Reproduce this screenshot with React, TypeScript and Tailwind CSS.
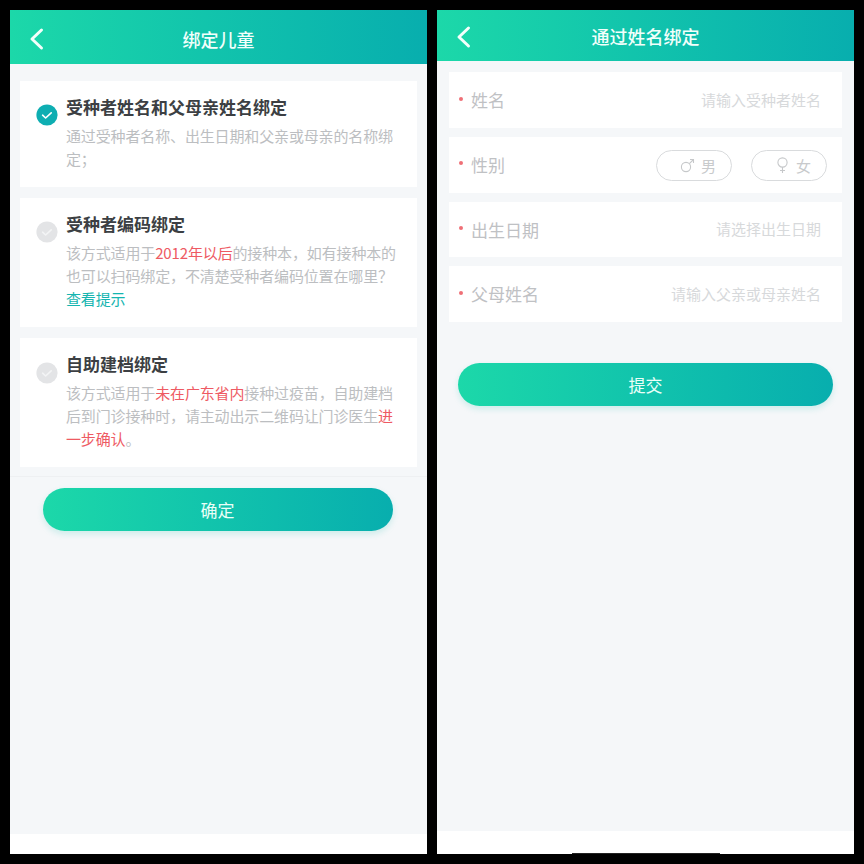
import React from "react";

const font = { fontFamily: '"Noto Sans CJK SC", "Noto Sans", sans-serif' };

function Header({ title, h, backTop, titlePad }: { title: string; h: string; backTop: string; titlePad: string }) {
  return (
    <div className={`${h} shrink-0 relative flex items-center justify-center bg-gradient-to-r from-[#1cd8a9] to-[#08aeae]`}>
      <svg className={`absolute left-[18px] ${backTop}`} width="17" height="24" viewBox="0 0 17 24" fill="none">
        <path d="M13.5 3 4 12l9.5 9" stroke="#f4fffb" strokeWidth="3" strokeLinecap="round" strokeLinejoin="round" />
      </svg>
      <span className={`text-[18px] leading-[24px] font-medium text-[#f2fffb] ${titlePad}`}>{title}</span>
    </div>
  );
}

function Check({ on }: { on: boolean }) {
  return (
    <svg className="shrink-0" width="22" height="22" viewBox="0 0 22 22" fill="none">
      <circle cx="11" cy="11" r="10.6" fill={on ? "#0eaeb2" : "#e3e4e6"} />
      <path d="M6.6 11.2l3 2.8 5.6-5.2" stroke={on ? "#ffffff" : "#f3f4f5"} strokeWidth="1.6" strokeLinecap="round" strokeLinejoin="round" />
    </svg>
  );
}

function Option({ on, title, h, checkTop, children }: { on: boolean; title: string; h: string; checkTop: string; children: React.ReactNode }) {
  return (
    <div className={`${h} bg-white flex pl-[16px]`}>
      <div className={`w-[30px] shrink-0 ${checkTop}`}>
        <Check on={on} />
      </div>
      <div className="flex-1 pt-[14px]">
        <div className="text-[17px] leading-[24px] font-semibold text-[#3c3f43] whitespace-nowrap">{title}</div>
        <div className="text-[15px] leading-[23px] tracking-[-0.14px] text-[#bcbec1] mt-[5px] whitespace-nowrap">{children}</div>
      </div>
    </div>
  );
}

const Red = ({ children }: { children: React.ReactNode }) => <span className="text-[#ee5a63]">{children}</span>;

function Button({ label, w }: { label: string; w: string }) {
  return (
    <div className={`${w} h-[43px] rounded-full flex items-center justify-center bg-gradient-to-r from-[#1cd8a9] to-[#08aeae] shadow-[0_3px_6px_rgba(20,190,170,0.18)] text-[17px] text-[#eafff8]`}>
      {label}
    </div>
  );
}

function Row({ label, placeholder, h, children }: { label: string; placeholder?: string; h: string; children?: React.ReactNode }) {
  return (
    <div className={`${h} bg-white flex items-center pl-[10px] pr-[21px]`}>
      <span className="w-[4px] h-[4px] rounded-full bg-[#ef6f76] mr-[8px] mb-[3px]" />
      <span className="text-[17px] text-[#bfc1c4] leading-[24px]">{label}</span>
      <div className="flex-1 flex justify-end items-center">
        {placeholder ? <span className="text-[15px] text-[#d7d9db]">{placeholder}</span> : children}
      </div>
    </div>
  );
}

function Pill({ label, icon }: { label: string; icon: React.ReactNode }) {
  return (
    <div className="w-[76px] h-[31px] rounded-full border border-[#d9dbdd] flex items-center justify-end pr-[15px] gap-[6px] text-[15px] text-[#c8cacc]">
      {icon}
      <span>{label}</span>
    </div>
  );
}

export default function App() {
  return (
    <div style={font} className="w-[864px] h-[864px] bg-black flex gap-[10px] pl-[10px] pt-[10px]">
      <div className="w-[417px] h-[844px] flex flex-col bg-white">
        <Header title="绑定儿童" h="h-[54px]" backTop="top-[17px]" titlePad="pt-[4px]" />
        <div className="flex-1 bg-[#f5f7f9] flex flex-col">
          <div className="px-[10px] pt-[17px] pb-[9px] flex flex-col gap-[11px]">
            <Option on title="受种者姓名和父母亲姓名绑定" h="h-[106px]" checkTop="pt-[23px]">
              通过受种者名称、出生日期和父亲或母亲的名称绑
              <br />
              定；
            </Option>
            <Option on={false} title="受种者编码绑定" h="h-[129px]" checkTop="pt-[23px]">
              该方式适用于<Red>2012年以后</Red>的接种本，如有接种本的
              <br />
              也可以扫码绑定，不清楚受种者编码位置在哪里？
              <br />
              <span className="text-[#15b5b0]">查看提示</span>
            </Option>
            <Option on={false} title="自助建档绑定" h="h-[129px]" checkTop="pt-[24px]">
              该方式适用于<Red>未在广东省内</Red>接种过疫苗，自助建档
              <br />
              后到门诊接种时，请主动出示二维码让门诊医生<Red>进</Red>
              <br />
              <Red>一步确认</Red>。
            </Option>
          </div>
          <div className="border-t border-[#eef0f2] pt-[11px] pr-[2px] flex justify-center">
            <Button label="确定" w="w-[350px]" />
          </div>
        </div>
        <div className="h-[20px] bg-white shrink-0" />
      </div>
      <div className="w-[417px] h-[844px] flex flex-col bg-white">
        <Header title="通过姓名绑定" h="h-[51px]" backTop="top-[15px]" titlePad="pt-0" />
        <div className="flex-1 bg-[#f5f7f9] flex flex-col">
          <div className="px-[12px] pt-[11px] flex flex-col gap-[9.3px]">
            <Row label="姓名" placeholder="请输入受种者姓名" h="h-[56px]" />
            <Row label="性别" h="h-[55.3px]">
              <div className="flex gap-[19px] mr-[-6px] mt-[2px]">
                <Pill
                  label="男"
                  icon={
                    <svg width="15" height="15" viewBox="0 0 15 15" fill="none" stroke="#c6c8ca" strokeWidth="1.1">
                      <circle cx="6" cy="9" r="4.6" />
                      <path d="M9.4 5.6 13.5 1.5M10 1.5h3.5V5" />
                    </svg>
                  }
                />
                <Pill
                  label="女"
                  icon={
                    <svg width="15" height="17" viewBox="0 0 15 17" fill="none" stroke="#c6c8ca" strokeWidth="1.1">
                      <circle cx="7.5" cy="5.5" r="4.6" />
                      <path d="M7.5 10v6M5 13.5h5" />
                    </svg>
                  }
                />
              </div>
            </Row>
            <Row label="出生日期" placeholder="请选择出生日期" h="h-[55.3px]" />
            <Row label="父母姓名" placeholder="请输入父亲或母亲姓名" h="h-[55.3px]" />
          </div>
          <div className="pt-[41px] flex justify-center">
            <Button label="提交" w="w-[375px]" />
          </div>
        </div>
        <div className="h-[23px] bg-white shrink-0 relative">
          <div className="absolute left-[135px] bottom-0 w-[148px] h-[1.5px] bg-[#222]" />
        </div>
      </div>
    </div>
  );
}
